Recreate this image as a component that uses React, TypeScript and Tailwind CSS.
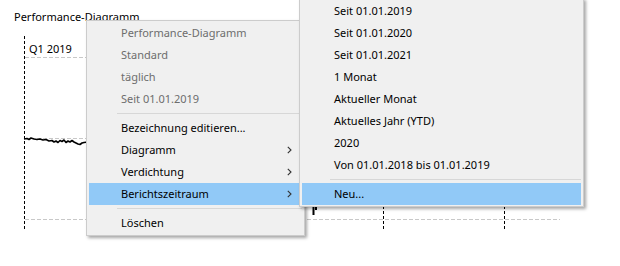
import clsx from 'clsx';

type ItemProps = {
  label: string;
  disabled?: boolean;
  sub?: boolean;
  active?: boolean;
};

const Chevron = () => (
  <svg width="5" height="8" viewBox="0 0 5 8" className="shrink-0">
    <path d="M0.8 0.8 L4 4 L0.8 7.2" fill="none" stroke="#333333" strokeWidth="1.1" />
  </svg>
);

const MenuItem = ({ label, disabled, sub, active }: ItemProps) => (
  <div
    className={clsx(
      'flex h-[22px] items-center justify-between pl-[32px] pr-[10px] leading-[22px] whitespace-nowrap',
      active && 'bg-[#91c9f7]',
      disabled ? 'text-[#6d6d6d]' : 'text-black'
    )}
  >
    <span>{label}</span>
    {sub && <Chevron />}
  </div>
);

const Separator = () => (
  <div className="flex h-[7px] items-center pl-[28px]">
    <div className="h-px w-full bg-[#d7d7d7]" />
  </div>
);

const Chart = () => (
  <svg width="620" height="236" viewBox="0 30 620 236" className="block">
    {/* horizontal grid */}
    <g stroke="#c8c8c8" strokeWidth="1" strokeDasharray="4 2">
      <line x1="25" y1="57.5" x2="560" y2="57.5" />
      <line x1="25" y1="138.5" x2="560" y2="138.5" />
      <line x1="25" y1="219.5" x2="560" y2="219.5" />
    </g>
    {/* vertical axes */}
    <g stroke="#000" strokeWidth="1" strokeDasharray="3 2">
      <line x1="24.5" y1="36" x2="24.5" y2="231" />
      <line x1="383.5" y1="36" x2="383.5" y2="231" />
      <line x1="504.5" y1="36" x2="504.5" y2="231" />
    </g>
    <polyline
      fill="none"
      stroke="#000"
      strokeWidth="1.6"
      strokeLinejoin="round"
      points="24,139 27,138.5 29,139.5 31,138 34,139 37,139.5 40,139 43,140 46,139.5 49,141 52,140.5 54,142 56,141 58,142.5 60,140.5 62,141.5 64,140 66,142.5 68,141 70,142 72,140.5 74,142 76,143 78,144 80,144.5 82,143 84,142.5 88,142"
    />
    <path d="M313.5 206 L313.5 215 M316 206 L316 210" stroke="#000" strokeWidth="2" fill="none" />
  </svg>
);

const mainItems1 = ['Performance-Diagramm', 'Standard', 'täglich', 'Seit 01.01.2019'];

const periods = [
  'Seit 01.01.2019',
  'Seit 01.01.2020',
  'Seit 01.01.2021',
  '1 Monat',
  'Aktueller Monat',
  'Aktuelles Jahr (YTD)',
  '2020',
  'Von 01.01.2018 bis 01.01.2019',
];

export default function App() {
  return (
    <div className="relative h-[266px] w-[620px] overflow-hidden bg-white font-['Noto_Sans',sans-serif] text-[11px] text-black">
      <div className="h-[30px] pl-[14px] pt-[8px] leading-[18px]">Performance-Diagramm</div>
      <div className="relative">
        <Chart />
        <span className="absolute left-[29px] top-[10px] leading-[18px]">Q1 2019</span>
      </div>

      {/* context menu */}
      <div className="absolute left-[86px] top-[20px] w-[219px] border border-[#cccccc] bg-[#f0f0f0] px-[2px] py-[1px] shadow-[2px_2px_3px_rgba(0,0,0,0.35)]">
        {mainItems1.map((l) => (
          <MenuItem key={l} label={l} disabled />
        ))}
        <Separator />
        <MenuItem label="Bezeichnung editieren..." />
        <MenuItem label="Diagramm" sub />
        <MenuItem label="Verdichtung" sub />
        <MenuItem label="Berichtszeitraum" sub active />
        <Separator />
        <MenuItem label="Löschen" />
      </div>

      {/* submenu */}
      <div className="absolute left-[299px] top-[-2px] w-[285px] border border-[#cccccc] bg-[#f0f0f0] px-[2px] py-[1px] shadow-[2px_2px_3px_rgba(0,0,0,0.35)]">
        {periods.map((l) => (
          <MenuItem key={l} label={l} />
        ))}
        <Separator />
        <MenuItem label="Neu..." active />
      </div>
    </div>
  );
}
